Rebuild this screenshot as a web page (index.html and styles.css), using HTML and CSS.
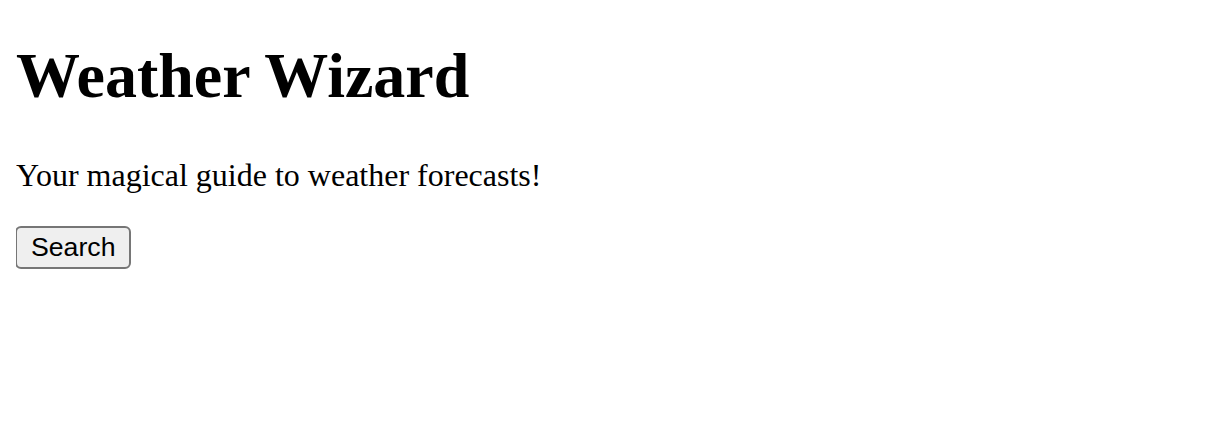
FILE: index.html
```html
<!DOCTYPE html>
<html lang="en">
<head>
<meta charset="utf-8">
<title>Weather Wizard</title>
<link rel="stylesheet" href="styles.css">
</head>
<body>
<h1 class="title">Weather Wizard</h1>
<p class="tagline">Your magical guide to weather forecasts!</p>
<button class="search-btn" type="button">Search</button>
</body>
</html>
```
FILE: styles.css
```css
html, body {
  background: #ffffff;
}
body {
  margin: 16px;
  font-family: "Liberation Serif", "Times New Roman", serif;
  color: #000000;
}
.title {
  font-size: 64px;
  font-weight: bold;
  margin: 23px 0 44px;
}
.tagline {
  font-size: 32px;
  margin: 32px 0;
}
.search-btn {
  font-family: "Liberation Sans", Arial, sans-serif;
  font-size: 26.67px;
  color: #000000;
  background: #efefef;
  border: 2px solid #767676;
  border-radius: 6px;
  padding: 4px 14px 4px 14px;
  line-height: normal;
  margin: 0 0 0 -1px;
}
```
